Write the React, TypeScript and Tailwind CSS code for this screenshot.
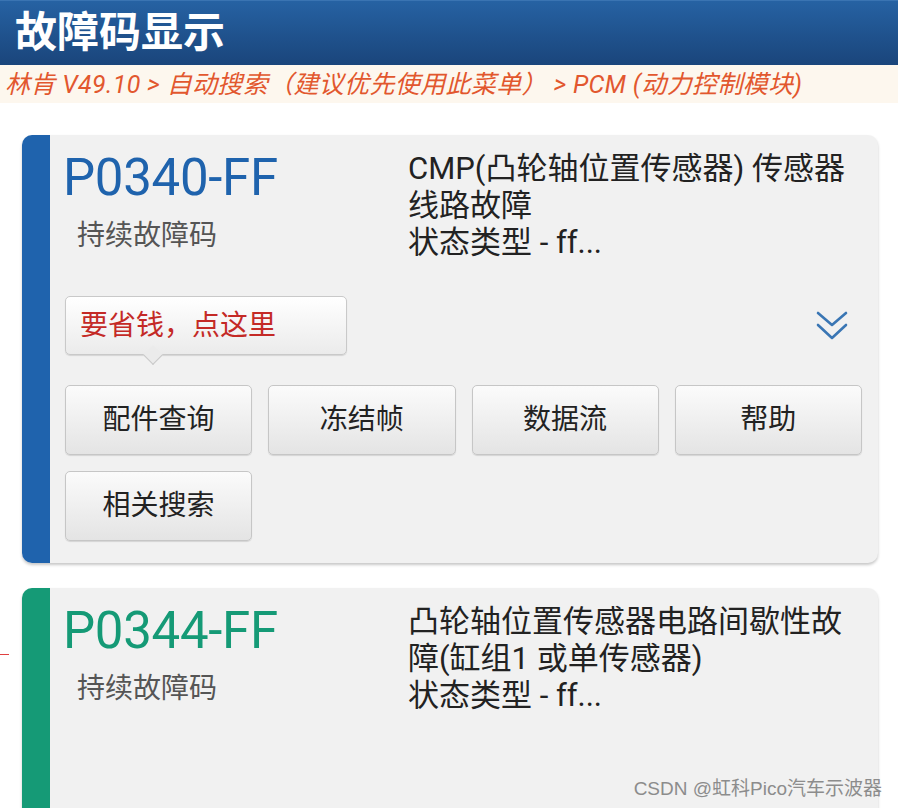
import React from "react";

const FONT = { fontFamily: 'Roboto, "Noto Sans CJK SC", sans-serif' };

function ChevronDouble() {
  return (
    <svg width="34" height="32" viewBox="0 0 34 32" fill="none" stroke="#3a76b4" strokeWidth="2.6" strokeLinecap="round" strokeLinejoin="round">
      <polyline points="3,3 17,15 31,3" />
      <polyline points="3,15 17,28 31,15" />
    </svg>
  );
}

function Btn({ label }: { label: string }) {
  return (
    <div className="h-[70px] flex items-center justify-center rounded-[5px] border border-[#c6c6c6] bg-gradient-to-b from-[#fbfbfb] to-[#e4e4e4] text-[28px] text-[#222] shadow-[0_1px_1px_rgba(0,0,0,0.12)]">
      {label}
    </div>
  );
}

function Card({
  code,
  color,
  desc,
  children,
  minH,
}: {
  code: string;
  color: string;
  desc: string[];
  children?: React.ReactNode;
  minH?: string;
}) {
  return (
    <div className={`flex rounded-[10px] overflow-hidden bg-[#f1f1f1] shadow-[0_2px_3px_rgba(0,0,0,0.22)] ${minH ?? ""}`}>
      <div className="w-[28px] shrink-0" style={{ backgroundColor: color }} />
      <div className="flex-1 pl-[13px] pr-[16px] pt-[15px] pb-[22px]">
        <div className="flex">
          <div className="w-[345px] shrink-0">
            <div className="text-[51px] leading-[56px] tracking-[-0.3px]" style={{ color }}>
              {code}
            </div>
            <div className="pl-[14px] mt-[13px] text-[28px] leading-[34px] text-[#555]">持续故障码</div>
          </div>
          <div className="flex-1 text-[31px] leading-[37px] text-[#222]">
            {desc.map((d, i) => (
              <div key={i} className="whitespace-nowrap">{d}</div>
            ))}
          </div>
        </div>
        {children}
      </div>
    </div>
  );
}

export default function App() {
  return (
    <div className="relative w-[898px] h-[808px] overflow-hidden bg-white" style={FONT}>
      <div className="h-[65px] bg-gradient-to-b from-[#2662a3] to-[#1a457b] border-t border-[#3a74b2] flex items-center pl-[15px]">
        <span className="text-[42px] font-bold text-white leading-none tracking-[0px]">故障码显示</span>
      </div>
      <div className="h-[38px] bg-[#fdf7ee] flex items-center pl-[5px] pt-[2px] text-[25px] tracking-[0.35px] italic text-[#e2572e] whitespace-nowrap">
        林肯 V49.10 &gt; 自动搜索（建议优先使用此菜单） &gt; PCM (动力控制模块)
      </div>

      <div className="pl-[22px] pr-[20px] pt-[32px] flex flex-col gap-[25px]">
        <Card
          code="P0340-FF"
          color="#1f63ad"
          desc={["CMP(凸轮轴位置传感器) 传感器", "线路故障", "状态类型 - ff..."]}
        >
          <div className="mt-[35px] flex items-center justify-between">
            <div className="relative ml-[2px] w-[282px] h-[59px] rounded-[5px] border border-[#c9c9c9] bg-gradient-to-b from-[#ffffff] to-[#ebebeb] flex items-center pl-[14px] text-[28px] text-[#c42a26] shadow-[0_1px_1px_rgba(0,0,0,0.12)]">
              要省钱，点这里
              <div className="absolute left-[80px] -bottom-[8px] w-[14px] h-[14px] rotate-45 bg-[#ebebeb] border-r border-b border-[#c9c9c9]" />
            </div>
            <div className="mr-[13px]">
              <ChevronDouble />
            </div>
          </div>
          <div className="mt-[30px] ml-[2px] grid grid-cols-4 gap-[16px]">
            <Btn label="配件查询" />
            <Btn label="冻结帧" />
            <Btn label="数据流" />
            <Btn label="帮助" />
            <Btn label="相关搜索" />
          </div>
        </Card>

        <Card
          code="P0344-FF"
          color="#159a76"
          desc={["凸轮轴位置传感器电路间歇性故", "障(缸组1 或单传感器)", "状态类型 - ff..."]}
          minH="min-h-[300px]"
        />
      </div>

      <div className="absolute left-0 top-[654px] w-[9px] h-[1px] bg-[#e04040]" />
      <div className="absolute right-[16px] bottom-[10px] text-[19px] leading-none text-[#8c8c8c] whitespace-nowrap" style={{ fontFamily: '"Liberation Sans", "Noto Sans CJK SC", sans-serif' }}>
        CSDN @虹科Pico汽车示波器
      </div>
    </div>
  );
}
